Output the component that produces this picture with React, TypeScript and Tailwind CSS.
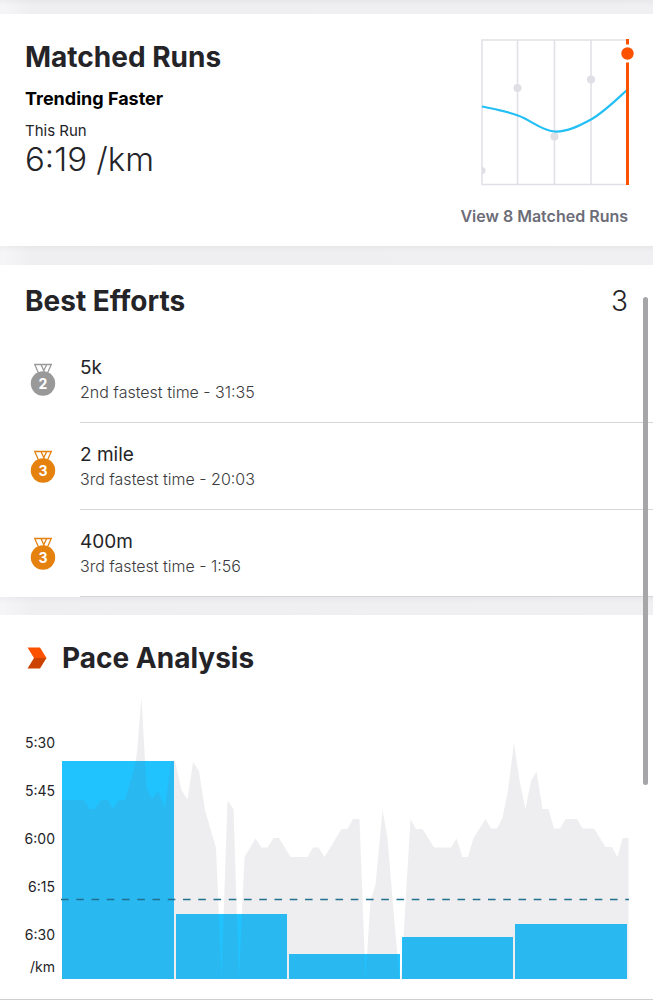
import type { ReactNode } from "react";
import { clsx } from "clsx";

const efforts = [
  { name: "5k", detail: "2nd fastest time - 31:35", rank: 2 },
  { name: "2 mile", detail: "3rd fastest time - 20:03", rank: 3 },
  { name: "400m", detail: "3rd fastest time - 1:56", rank: 3 },
];

const paceTicks = ["5:30", "5:45", "6:00", "6:15", "6:30"];

const CHART_W = 567;
const CHART_H = 284;

const splits = [
  { x: 0, w: 112, top: 66 },
  { x: 114, w: 111, top: 219 },
  { x: 227, w: 111, top: 259 },
  { x: 340, w: 111, top: 242 },
  { x: 453, w: 112, top: 229 },
];

// Elevation profile behind and over the split bars.
const profile =
  "0,105 22,105 28,114 33,114 39,105 46,105 51,114 57,105 63,105 73,71 75,57 79.5,2 84.5,93 90,104 96,96 103,113 109,66 113,66 " +
  "119.5,95 125.5,104.5 131,67 137,76 143,115 154,153 159.5,284 165.5,105.5 171.5,114 177,284 182.5,162 193.5,143.5 199.5,152.5 205.5,152.5 " +
  "211.5,143 217,143 228.5,162 245.5,162 251,152.5 256.5,152.5 262.5,162 279.5,134 285.5,134 291,124 297.5,124 303.5,284 308.5,205 313.5,190 " +
  "320.5,115 325.5,143 331,210 337.5,284 339,284 348.5,124 354,134 360.5,134 372,152.5 389,152.5 394.5,143.5 400.5,162 406,162 411.5,143 " +
  "423.5,124 429,133.5 435,133.5 440.5,123 446,95 452,48 458,88 463.5,114 469,86 474.5,76.5 480.5,114 486.5,114 492,133.5 498,133.5 " +
  "503.5,124 515,124 520.5,133.5 532,133.5 543.5,152 550,152 555.5,162 560.5,143 566.5,143 566.5,284 0,284";

function SectionTitle({ children }: { children: ReactNode }) {
  return <h2 className="text-[28px] font-bold leading-9 text-[#242428]">{children}</h2>;
}

function Gap({ className }: { className: string }) {
  return (
    <div
      className={clsx(
        "bg-linear-to-r from-[#f6f6f8] via-[#efeff2] via-5% to-[#f0f0f3] shadow-[inset_0_5px_6px_-4px_rgba(36,36,40,0.06)]",
        className,
      )}
    />
  );
}

function TrendChart() {
  return (
    <svg width="147" height="147" className="overflow-visible" role="img" aria-label="Matched runs trend">
      <g stroke="#e0e0e6" strokeWidth="1.5" fill="none">
        <path d="M146 1H1V145.500H146" />
        <path d="M36.500 1V145M73.500 1V145M110 1V145" />
      </g>
      <g fill="#dfdfe6">
        <path d="M1 128a3.500 3.500 0 0 1 0 7z" />
        <circle cx="36.500" cy="49" r="4" />
        <circle cx="73.500" cy="97.500" r="4" />
        <circle cx="110" cy="40.500" r="4" />
      </g>
      <path
        d="M1 67.500C13 70 25 72 37 76.500C50 81 60 91.500 73.500 92.500C86 93 98 87 110 80.500C123 73 134 62 146 51"
        stroke="#23bff5"
        strokeWidth="2.200"
        fill="none"
      />
      <path d="M146.500 0V5.500M146.500 23.500V146" stroke="#fc5200" strokeWidth="3" />
      <circle cx="146.500" cy="14.500" r="6.200" fill="#fc5200" />
    </svg>
  );
}

function Medal({ rank }: { rank: number }) {
  const color = rank === 2 ? "#999999" : "#e5810e";
  return (
    <svg width="26" height="34" viewBox="0 0 26 34" aria-hidden="true">
      <path
        d="M8.500 10L4.700 1.500H21.300L17.500 10M11 1.500L14.800 10M16.800 1.500L13.800 7.500"
        stroke={color}
        strokeWidth="1.300"
        fill="none"
      />
      <circle cx="13" cy="20.500" r="12.200" fill={color} />
      <text x="13" y="25.500" textAnchor="middle" fontSize="14" fontWeight="700" fill="#fff">
        {rank}
      </text>
    </svg>
  );
}

function PaceChart() {
  return (
    <svg
      viewBox={`0 0 ${CHART_W} ${CHART_H}`}
      className="block w-full overflow-visible"
      role="img"
      aria-label="Pace per kilometre"
    >
      {splits.map((s) => (
        <rect key={s.x} x={s.x} y={s.top} width={s.w} height={CHART_H - s.top} fill="#21c3ff" />
      ))}
      <polygon points={profile} fill="#68687a" fillOpacity="0.113" />
      <path d="M-1 204.500H567" stroke="#23718f" strokeWidth="1.600" strokeDasharray="7.600 7.650" />
    </svg>
  );
}

export default function App() {
  return (
    <main className="relative bg-white font-['Inter','Liberation_Sans',sans-serif] text-[#242428]">
      <Gap className="h-[14px]" />

      <section className="flex justify-between px-[25px] pb-5 pt-[25px]">
        <div>
          <SectionTitle>Matched Runs</SectionTitle>
          <p className="mt-3 text-[18px] font-bold leading-6 text-black">Trending Faster</p>
          <p className="mt-2.5 text-[15px] leading-5">This Run</p>
          <p className="mt-0.5 text-[33px] font-light leading-8">6:19 /km</p>
        </div>
        <div className="flex flex-col items-end">
          <TrendChart />
          <a href="#matched-runs" className="mt-5 text-base font-semibold leading-5 text-[#6d6d78]">
            View 8 Matched Runs
          </a>
        </div>
      </section>

      <Gap className="h-[19px]" />

      <section>
        <header className="flex h-[71px] items-center justify-between px-[25px]">
          <SectionTitle>Best Efforts</SectionTitle>
          <span className="text-[28px] font-light leading-9">3</span>
        </header>
        <ul>
          {efforts.map((e) => (
            <li key={e.name} className="flex pl-[30px]">
              <div className="w-[50px] shrink-0 pt-[27px]">
                <Medal rank={e.rank} />
              </div>
              <div className="h-[87px] flex-1 border-b border-[#d5d5da] pt-5">
                <p className="text-[19px] leading-6">{e.name}</p>
                <p className="text-base font-light leading-6 text-[#3c3c40]">{e.detail}</p>
              </div>
            </li>
          ))}
        </ul>
      </section>

      <Gap className="h-[18px]" />

      <section className="border-b border-[#cfcfd2] pb-5 pr-6">
        <header className="flex h-20 items-center pl-[27px] pt-1.5">
          <svg width="20" height="22" viewBox="0 0 20 22" className="mr-[15px]" aria-hidden="true">
            <path d="M0.500 0.500H13L19.500 11H7Z" fill="#fc5200" />
            <path d="M7 11H19.500L13 21.500H0.500Z" fill="#cc4200" />
          </svg>
          <SectionTitle>Pace Analysis</SectionTitle>
        </header>
        <div className="flex">
          <div className="w-[62px] shrink-0 pr-[7px] pt-6 text-right text-sm">
            {paceTicks.map((t) => (
              <div key={t} className="h-12 leading-[48px]">
                {t}
              </div>
            ))}
            <div className="leading-4">/km</div>
          </div>
          <div className="flex-1">
            <PaceChart />
          </div>
        </div>
      </section>

      <div className="absolute right-[5px] top-[297px] h-[488px] w-[5px] rounded-full bg-[#a6a6a8]" />
    </main>
  );
}
